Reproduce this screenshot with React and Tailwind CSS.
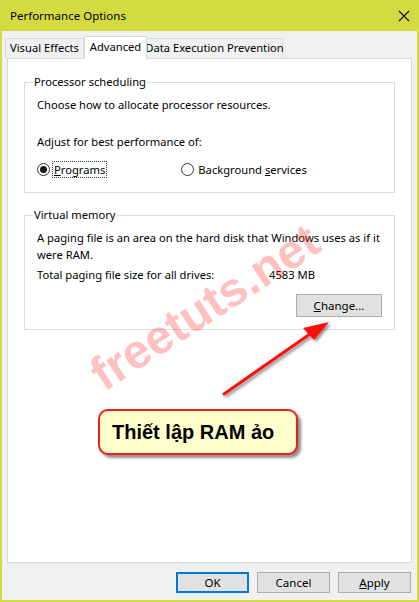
import React from 'react';

const ui = { fontFamily: '"Noto Sans", "Open Sans", sans-serif' };

function Radio({ checked }) {
  return (
    <span className="w-[13px] h-[13px] rounded-full border border-[#333] bg-white flex items-center justify-center shrink-0">
      {checked && <span className="w-[7px] h-[7px] rounded-full bg-[#1a1a1a]" />}
    </span>
  );
}

function Group({ title, className, children }) {
  return (
    <div className={`relative mx-4 border border-[#dcdcdc] ${className}`}>
      <span className="absolute -top-[9px] left-2 bg-white px-[1px] leading-[16px]">{title}</span>
      {children}
    </div>
  );
}

function Btn({ children, primary, className = '' }) {
  return (
    <button
      className={`h-[21px] bg-[#e1e1e1] flex items-center justify-center text-[11.5px] text-black ${
        primary ? 'border-2 border-[#0078d7]' : 'border border-[#adadad]'
      } ${className}`}
    >
      {children}
    </button>
  );
}

export default function App() {
  return (
    <div
      className="w-[419px] h-[602px] bg-[#f0f0f0] border-x-2 border-b-2 border-[#d2dc40] flex flex-col text-[11.2px] text-black relative"
      style={ui}
    >
      {/* title bar */}
      <div className="h-[31px] -mx-[2px] bg-[#d2dc40] flex items-center justify-between pl-[10px] pr-[9px] shrink-0">
        <span className="text-[11.5px]">Performance Options</span>
        <svg width="12" height="12" viewBox="0 0 12 12">
          <path d="M1 1 L11 11 M11 1 L1 11" stroke="#111" strokeWidth="1.1" />
        </svg>
      </div>

      {/* tabs */}
      <div className="flex items-end pl-[3px] mt-[4px] h-[23px] shrink-0 whitespace-nowrap">
        <div className="h-[20px] w-[79px] border border-b-0 border-[#d9d9d9] bg-[#f0f0f0] flex items-center justify-center">
          Visual Effects
        </div>
        <div className="h-[23px] w-[63px] -mb-[1px] border border-b-0 border-[#d9d9d9] bg-white flex items-start justify-center pt-[2px] relative z-10">
          Advanced
        </div>
        <div className="h-[20px] w-[136px] border border-b-0 border-l-0 border-[#d9d9d9] bg-[#f0f0f0] flex items-center justify-center">
          Data Execution Prevention
        </div>
      </div>

      {/* panel */}
      <div className="mx-[5px] h-[505px] bg-white border border-[#d9d9d9] flex flex-col pt-[23px] shrink-0">
        <Group title="Processor scheduling" className="h-[111px] pl-[12px] pt-[13px]">
          <div className="leading-[17px]">Choose how to allocate processor resources.</div>
          <div className="leading-[17px] mt-[20px]">Adjust for best performance of:</div>
          <div className="flex items-center mt-[11px]">
            <Radio checked />
            <span className="ml-[2px] px-[1px] border border-dotted border-[#333] leading-[15px]">
              <u>P</u>rograms
            </span>
            <span className="ml-[74px]"><Radio /></span>
            <span className="ml-[4px] leading-[15px]">
              Background <u>s</u>ervices
            </span>
          </div>
        </Group>

        <Group title="Virtual memory" className="mt-[22px] h-[115px] pl-[12px] pt-[13px] pr-[10px]">
          <div className="leading-[17px]">A paging file is an area on the hard disk that Windows uses as if it were RAM.</div>
          <div className="flex mt-[3px] leading-[17px]">
            <span className="w-[232px]">Total paging file size for all drives:</span>
            <span>4583 MB</span>
          </div>
          <div className="flex justify-end pr-[2px] mt-[11px]">
            <Btn className="w-[86px] h-[23px]">
              <u>C</u>hange...
            </Btn>
          </div>
        </Group>
      </div>

      {/* bottom buttons */}
      <div className="flex justify-end gap-[8px] pr-[6px] mt-[9px]">
        <Btn primary className="w-[73px]">OK</Btn>
        <Btn className="w-[73px]">Cancel</Btn>
        <Btn className="w-[73px]"><u>A</u>pply</Btn>
      </div>

      {/* watermark */}
      <svg className="absolute left-[80px] top-[200px] pointer-events-none" width="300" height="205" viewBox="80 200 300 205">
        <text
          x="102"
          y="392"
          transform="rotate(-33 102 392)"
          fontSize="48"
          fontWeight="bold"
          fontFamily='"Liberation Sans", Arial, sans-serif'
          fill="#ff3030"
          fillOpacity="0.3"
        >
          freetuts.net
        </text>
      </svg>

      {/* arrow */}
      <svg className="absolute left-[210px] top-[310px] pointer-events-none" width="130" height="100" viewBox="210 310 130 100">
        <defs>
          <filter id="sh" x="-20%" y="-20%" width="140%" height="140%">
            <feDropShadow dx="2" dy="2" stdDeviation="1.5" floodColor="#000" floodOpacity="0.45" />
          </filter>
        </defs>
        <g filter="url(#sh)">
          <path d="M222 394 L308 334" stroke="#ff1010" strokeWidth="3" strokeLinecap="round" />
          <path d="M327 322 L301 328 L312 340 Z" fill="#ff1010" />
        </g>
      </svg>

      {/* callout */}
      <div
        className="absolute left-[96px] top-[409px] w-[200px] h-[46px] rounded-[10px] bg-[#ffffcc] border-2 border-[#ee1c1c] shadow-[3px_3px_3px_rgba(0,0,0,0.45)] flex items-center pl-[12px] text-[20px] font-bold"
        style={{ fontFamily: '"Liberation Sans", Arial, sans-serif' }}
      >
        Thiết lập RAM ảo
      </div>
    </div>
  );
}
